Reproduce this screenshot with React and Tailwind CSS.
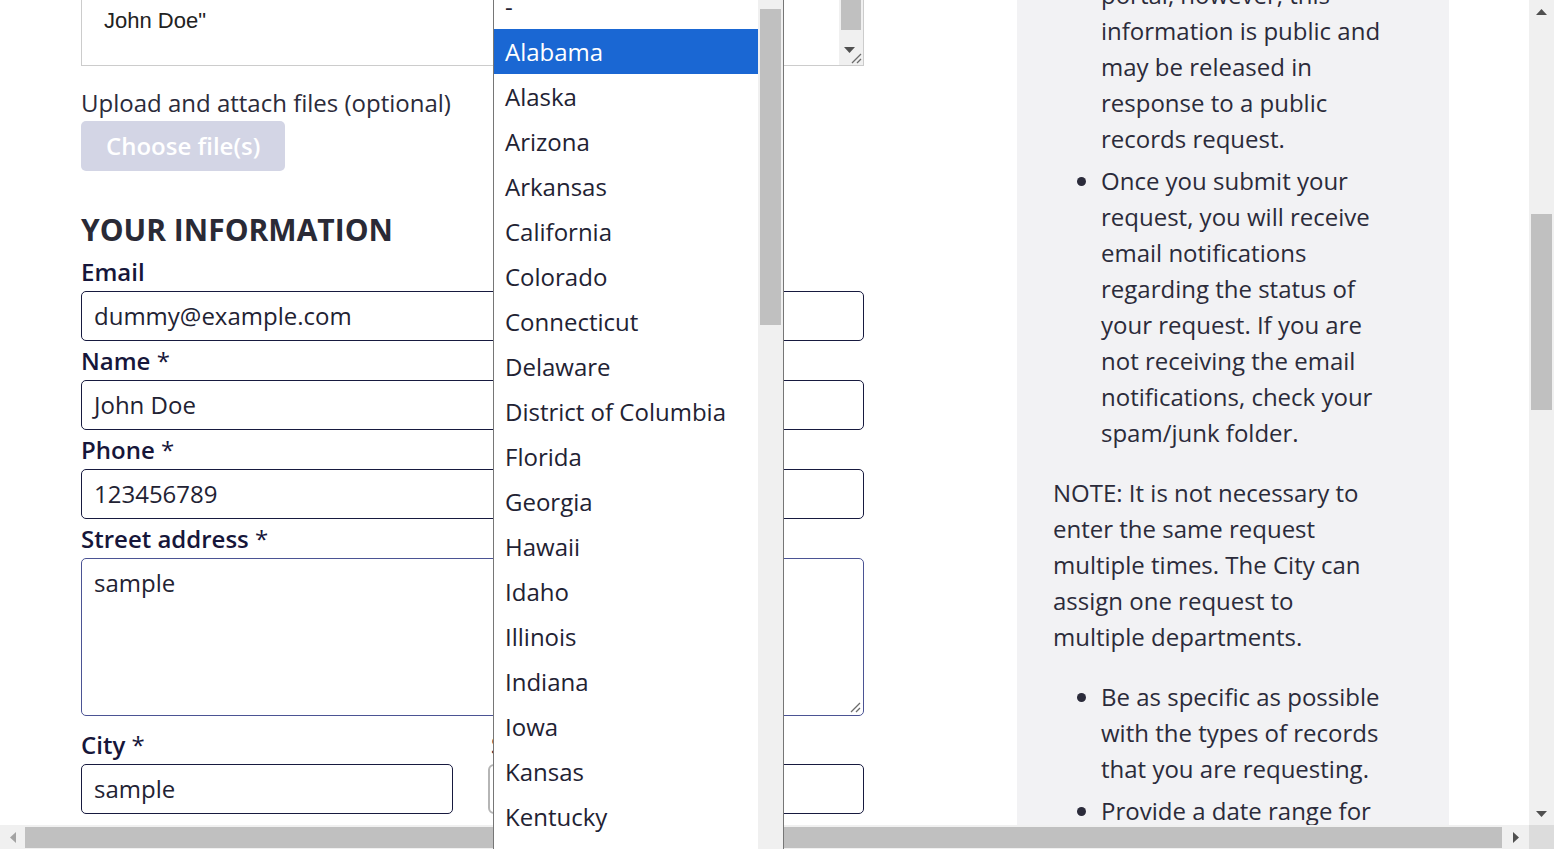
import React from "react";

const states = [
  "-",
  "Alabama",
  "Alaska",
  "Arizona",
  "Arkansas",
  "California",
  "Colorado",
  "Connecticut",
  "Delaware",
  "District of Columbia",
  "Florida",
  "Georgia",
  "Hawaii",
  "Idaho",
  "Illinois",
  "Indiana",
  "Iowa",
  "Kansas",
  "Kentucky",
  "Louisiana",
];

function Grip({ className }) {
  return (
    <svg className={className} width="11" height="11" viewBox="0 0 11 11">
      <path d="M1 10 L10 1 M6 10 L10 6" stroke="#6b6b6b" strokeWidth="1.3" fill="none" />
    </svg>
  );
}

function Field({ label, required, value, className = "" }) {
  return (
    <div className={`mb-[1px] ${className}`}>
      <div className="pt-[1px] leading-[36px] mb-[1px] font-semibold text-[#16163a]">
        {label}
        {required && <span className="font-normal"> *</span>}
      </div>
      <div className="h-[50px] border border-[#171a3f] rounded-[5px] px-[12px] flex items-center text-[#222233]">
        {value}
      </div>
    </div>
  );
}

function VScrollbar() {
  return (
    <div className="w-[25px] shrink-0 bg-[#f0f0f0] flex flex-col">
      <div className="h-[25px] flex items-center justify-center pb-[1px]">
        <svg width="11" height="6" viewBox="0 0 11 6">
          <path d="M0 6 L5.5 0 L11 6 Z" fill="#505050" />
        </svg>
      </div>
      <div className="h-[189px]" />
      <div className="h-[196px] mx-[2px] bg-[#c0c0c0]" />
      <div className="flex-1" />
      <div className="h-[25px] flex items-center justify-center pt-[2px]">
        <svg width="11" height="6" viewBox="0 0 11 6">
          <path d="M0 0 L11 0 L5.5 6 Z" fill="#505050" />
        </svg>
      </div>
    </div>
  );
}

function HScrollbar() {
  return (
    <div className="h-[24px] shrink-0 flex">
      <div className="flex-1 bg-[#f0f0f0] flex items-center">
        <div className="w-[25px] h-full flex items-center justify-center">
          <svg width="6" height="11" viewBox="0 0 6 11">
            <path d="M6 0 L6 11 L0 5.5 Z" fill="#a3a3a3" />
          </svg>
        </div>
        <div className="w-[1477px] h-[21px] bg-[#c0c0c0]" />
        <div className="flex-1 h-full flex items-center justify-center">
          <svg width="6" height="11" viewBox="0 0 6 11">
            <path d="M0 0 L6 5.5 L0 11 Z" fill="#505050" />
          </svg>
        </div>
      </div>
      <div className="w-[25px] bg-[#dcdcdc]" />
    </div>
  );
}

function StateList() {
  return (
    <div className="absolute left-[493px] top-[-16px] w-[291px] h-[900px] bg-white border-x border-[#767676] flex font-['Open_Sans',sans-serif] text-[24px]">
      <ul className="w-[264px] shrink-0">
        {states.map((s) => (
          <li
            key={s}
            className={
              s === "Alabama"
                ? "h-[45px] leading-[45px] pl-[11px] bg-[#1a67d3] text-white"
                : "h-[45px] leading-[45px] pl-[11px] text-[#222233]"
            }
          >
            {s}
          </li>
        ))}
      </ul>
      <div className="flex-1 bg-[#f0f0f0] pt-[25px] px-[2px]">
        <div className="h-[316px] bg-[#c0c0c0]" />
      </div>
    </div>
  );
}

export default function App() {
  return (
    <div className="relative w-[1554px] h-[849px] overflow-hidden bg-white flex flex-col font-['Open_Sans',sans-serif] text-[24px] text-[#2b2b3a]">
      <div className="flex flex-1 min-h-0">
        <div className="flex-1 min-w-0 flex overflow-hidden">
          <div className="w-[81px] shrink-0" />

          {/* Request form */}
          <form className="w-[783px] shrink-0 -mt-[54px]">
            <div className="h-[120px] border border-[#cccccc] flex">
              <div className="flex-1 pl-[22px] pt-[59px] font-['Liberation_Sans',Arial,sans-serif] text-[22px] leading-[30px] text-[#222]">
                John Doe"
              </div>
              <div className="w-[24px] bg-[#f0f0f0] flex flex-col">
                <div className="h-[83px] px-[2px]">
                  <div className="h-full bg-[#c0c0c0]" />
                </div>
                <div className="flex-1 relative">
                  <svg className="absolute left-[5px] top-[17px]" width="11" height="6" viewBox="0 0 11 6">
                    <path d="M0 0 L11 0 L5.5 6 Z" fill="#505050" />
                  </svg>
                  <Grip className="absolute right-[1px] bottom-[1px]" />
                </div>
              </div>
            </div>

            <div className="mt-[19px] leading-[36px]">Upload and attach files (optional)</div>
            <button
              type="button"
              className="h-[50px] px-[25px] rounded-[5px] bg-[#d3d5e5] text-white font-semibold text-[24px]"
            >
              Choose file(s)
            </button>

            <h2 className="mt-[41px] text-[30px] leading-[36px] font-bold text-[#2a2a36]">YOUR INFORMATION</h2>

            <div className="mt-[5px]">
              <Field label="Email" value="dummy@example.com" />
              <Field label="Name" required value="John Doe" />
              <Field label="Phone" required value="123456789" />

              <div className="pt-[1px] leading-[36px] mb-[1px] font-semibold text-[#16163a]">
                Street address<span className="font-normal"> *</span>
              </div>
              <div className="relative h-[158px] border border-[#4b5394] rounded-[5px] px-[12px] pt-[6px] text-[#222233]">
                sample
                <Grip className="absolute right-[2px] bottom-[2px]" />
              </div>

              <div className="mt-[10px] flex gap-[35px]">
                <Field label="City" required value="sample" className="w-[372px]" />
                <div className="w-[170px]">
                  <div className="pt-[1px] pl-[3px] leading-[36px] mb-[1px] font-semibold text-[#16163a]">
                    State<span className="font-normal"> *</span>
                  </div>
                  <div className="h-[50px] border-2 border-[#b5b5b5] rounded-[6px]" />
                </div>
                <Field label="Zip" required value="" className="flex-1" />
              </div>
            </div>
          </form>

          <div className="w-[153px] shrink-0" />

          {/* Help sidebar */}
          <aside className="w-[432px] shrink-0 bg-[#f2f2f4] pl-[36px] pr-[64px] leading-[36px] text-[#2b2b3a]">
            <div className="-mt-[95px]">
              <ul className="list-disc pl-[48px] space-y-[6px]">
                <li>
                  Contact information is optional in this online portal, however, this information is public and
                  may be released in response to a public records request.
                </li>
                <li>
                  Once you submit your request, you will receive email notifications regarding the status of
                  your request. If you are not receiving the email notifications, check your spam/junk folder.
                </li>
              </ul>
              <p className="mt-[24px]">
                NOTE: It is not necessary to enter the same request multiple times. The City can assign one
                request to multiple departments.
              </p>
              <ul className="mt-[24px] list-disc pl-[48px] space-y-[6px]">
                <li>Be as specific as possible with the types of records that you are requesting.</li>
                <li>Provide a date range for the records you are requesting.</li>
              </ul>
            </div>
          </aside>
        </div>
        <VScrollbar />
      </div>
      <HScrollbar />

      <StateList />
    </div>
  );
}
